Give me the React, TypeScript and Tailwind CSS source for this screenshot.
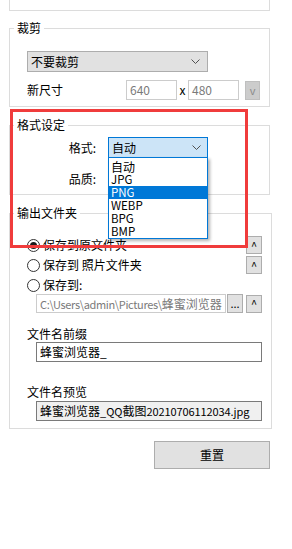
import { useState } from "react"

function Chevron() {
  return (
    <svg width="9" height="5" viewBox="0 0 9 5" className="shrink-0">
      <polyline points="0.5,0.5 4.5,4.5 8.5,0.5" fill="none" stroke="#505050" strokeWidth="1" />
    </svg>
  )
}

function SmallButton({ label }: { label: string }) {
  return (
    <div className="w-[16px] h-[18px] flex items-center justify-center bg-[#e1e1e1] border border-[#adadad] text-[11px] leading-none text-black">
      {label}
    </div>
  )
}

function Radio({ checked, label }: { checked?: boolean; label: string }) {
  return (
    <div className="flex items-center gap-[3px]">
      <div className="w-[13px] h-[13px] rounded-full border border-[#333] bg-white flex items-center justify-center">
        {checked && <div className="w-[7px] h-[7px] rounded-full bg-[#1a1a1a]" />}
      </div>
      <span className="text-[12px] leading-[16px]">{label}</span>
    </div>
  )
}

const formats = ["自动", "JPG", "PNG", "WEBP", "BPG", "BMP"]

export default function App() {
  const [selected] = useState("PNG")

  return (
    <div className="relative w-[292px] h-[549px] bg-white text-black font-['Noto_Sans_CJK_SC','Noto_Sans',sans-serif] overflow-hidden">
      <div className="pl-[9px] flex flex-col">
        {/* previous group (cut off) */}
        <div className="w-[261px] h-[11px] border border-t-0 border-[#dcdcdc]" />

        {/* 裁剪 */}
        <fieldset className="mt-[9px] w-[261px] border border-[#dcdcdc]">
          <legend className="ml-[4px] px-[3px] text-[12px] leading-[16px]">裁剪</legend>
          <div className="pt-[15px] pl-[17px] pr-[8px] pb-[6px]">
            <div className="w-[181px] h-[21px] flex items-center justify-between pl-[3px] pr-[7px] bg-[#e1e1e1] border border-[#adadad] text-[12px] leading-[16px]">
              <span>不要裁剪</span>
              <Chevron />
            </div>
            <div className="mt-[8px] h-[20px] flex items-center">
              <span className="w-[99px] text-[12px] leading-[16px]">新尺寸</span>
              <div className="w-[51px] h-[20px] border border-[#cccccc] pl-[3px] text-[12px] leading-[18px] text-[#7a7a7a]">640</div>
              <span className="w-[11px] text-center text-[12px] leading-[16px]">x</span>
              <div className="w-[51px] h-[20px] border border-[#cccccc] pl-[3px] text-[12px] leading-[18px] text-[#7a7a7a]">480</div>
              <div className="ml-[6px] w-[15px] h-[19px] flex items-center justify-center bg-[#cccccc] border border-[#bfbfbf] text-[11px] text-[#8a8a8a]">v</div>
            </div>
          </div>
        </fieldset>

        {/* 格式设定 */}
        <fieldset className="mt-[10px] w-[261px] border border-[#dcdcdc]">
          <legend className="ml-[4px] px-[3px] text-[12px] leading-[16px]">格式设定</legend>
          <div className="pt-[4px] pl-[17px] pb-[5px] flex flex-col gap-[10px]">
            <div className="h-[21px] flex items-center">
              <span className="w-[70px] pr-[1px] text-right text-[12px] leading-[16px]">格式:</span>
              <div className="relative ml-[11px] z-10">
                <div className="w-[100px] h-[21px] flex items-center justify-between pl-[3px] pr-[6px] bg-[#cce4f7] border border-[#0078d7] text-[12px] leading-[16px]">
                  <span>自动</span>
                  <Chevron />
                </div>
                <ul className="absolute left-0 top-[20px] w-[100px] pt-[2px] bg-white border border-[#0078d7] shadow-[2px_2px_3px_rgba(0,0,0,0.3)]">
                  {formats.map((f) => (
                    <li
                      key={f}
                      className={`h-[13px] pl-[2px] leading-[13px] ${
                        f === "自动" ? "text-[12px]" : "text-[11.5px]"
                      } ${f === selected ? "bg-[#0078d7] text-white" : "text-black"}`}
                    >
                      {f}
                    </li>
                  ))}
                </ul>
              </div>
            </div>
            <div className="h-[21px] flex items-center">
              <span className="w-[70px] pr-[1px] text-right text-[12px] leading-[16px]">品质:</span>
            </div>
          </div>
        </fieldset>

        {/* 输出文件夹 */}
        <fieldset className="mt-[10px] w-[261px] border border-[#dcdcdc]">
          <legend className="ml-[4px] px-[3px] text-[12px] leading-[16px]">输出文件夹</legend>
          <div className="pt-[15px] pl-[17px] pr-[9px] pb-[7px] flex flex-col">
            <div className="h-[18px] flex items-center justify-between">
              <Radio checked label="保存到原文件夹" />
              <SmallButton label="^" />
            </div>
            <div className="mt-[2px] h-[18px] flex items-center justify-between">
              <Radio label="保存到 照片文件夹" />
              <SmallButton label="^" />
            </div>
            <div className="mt-[2px] h-[18px] flex items-center">
              <Radio label="保存到:" />
            </div>
            <div className="ml-[9px] h-[19px] flex items-center">
              <div className="w-[190px] h-[19px] border border-[#cccccc] pl-[3px] text-[12px] leading-[17px] text-[#7a7a7a] whitespace-nowrap overflow-hidden">
                <span className="text-[11px] tracking-[-0.35px]">C:\Users\admin\Pictures\</span>蜂蜜浏览器
              </div>
              <div className="ml-[1px] w-[16px] h-[19px] flex items-end justify-center pb-[3px] bg-[#e1e1e1] border border-[#adadad] text-[11px] leading-none">
                ...
              </div>
              <div className="ml-[3px]">
                <SmallButton label="^" />
              </div>
            </div>
            <div className="mt-[13px] text-[12px] leading-[16px]">文件名前缀</div>
            <div className="ml-[9px] w-[226px] h-[20px] border border-[#7a7a7a] bg-white pl-[3px] text-[12px] leading-[18px] whitespace-nowrap overflow-hidden">
              蜂蜜浏览器_
            </div>
            <div className="mt-[22px] text-[12px] leading-[16px]">文件名预览</div>
            <div className="mt-[1px] ml-[9px] w-[226px] h-[20px] border border-[#7a7a7a] bg-[#f0f0f0] pl-[3px] text-[12px] leading-[18px] whitespace-nowrap overflow-hidden">
              蜂蜜浏览器<span className="text-[11px]">_QQ</span>截图<span className="text-[11px] tracking-[-0.1px]">20210706112034.jpg</span>
            </div>
          </div>
        </fieldset>

        <div className="mt-[12px] w-[261px] flex justify-end">
          <button className="w-[116px] h-[28px] bg-[#e1e1e1] border border-[#adadad] text-[12px] leading-[16px]">
            重置
          </button>
        </div>
      </div>

      {/* red annotation frame */}
      <div className="absolute left-[10px] top-[109px] w-[238px] h-[139px] border-[3px] border-[#f03c3c] pointer-events-none z-20" />
    </div>
  )
}
